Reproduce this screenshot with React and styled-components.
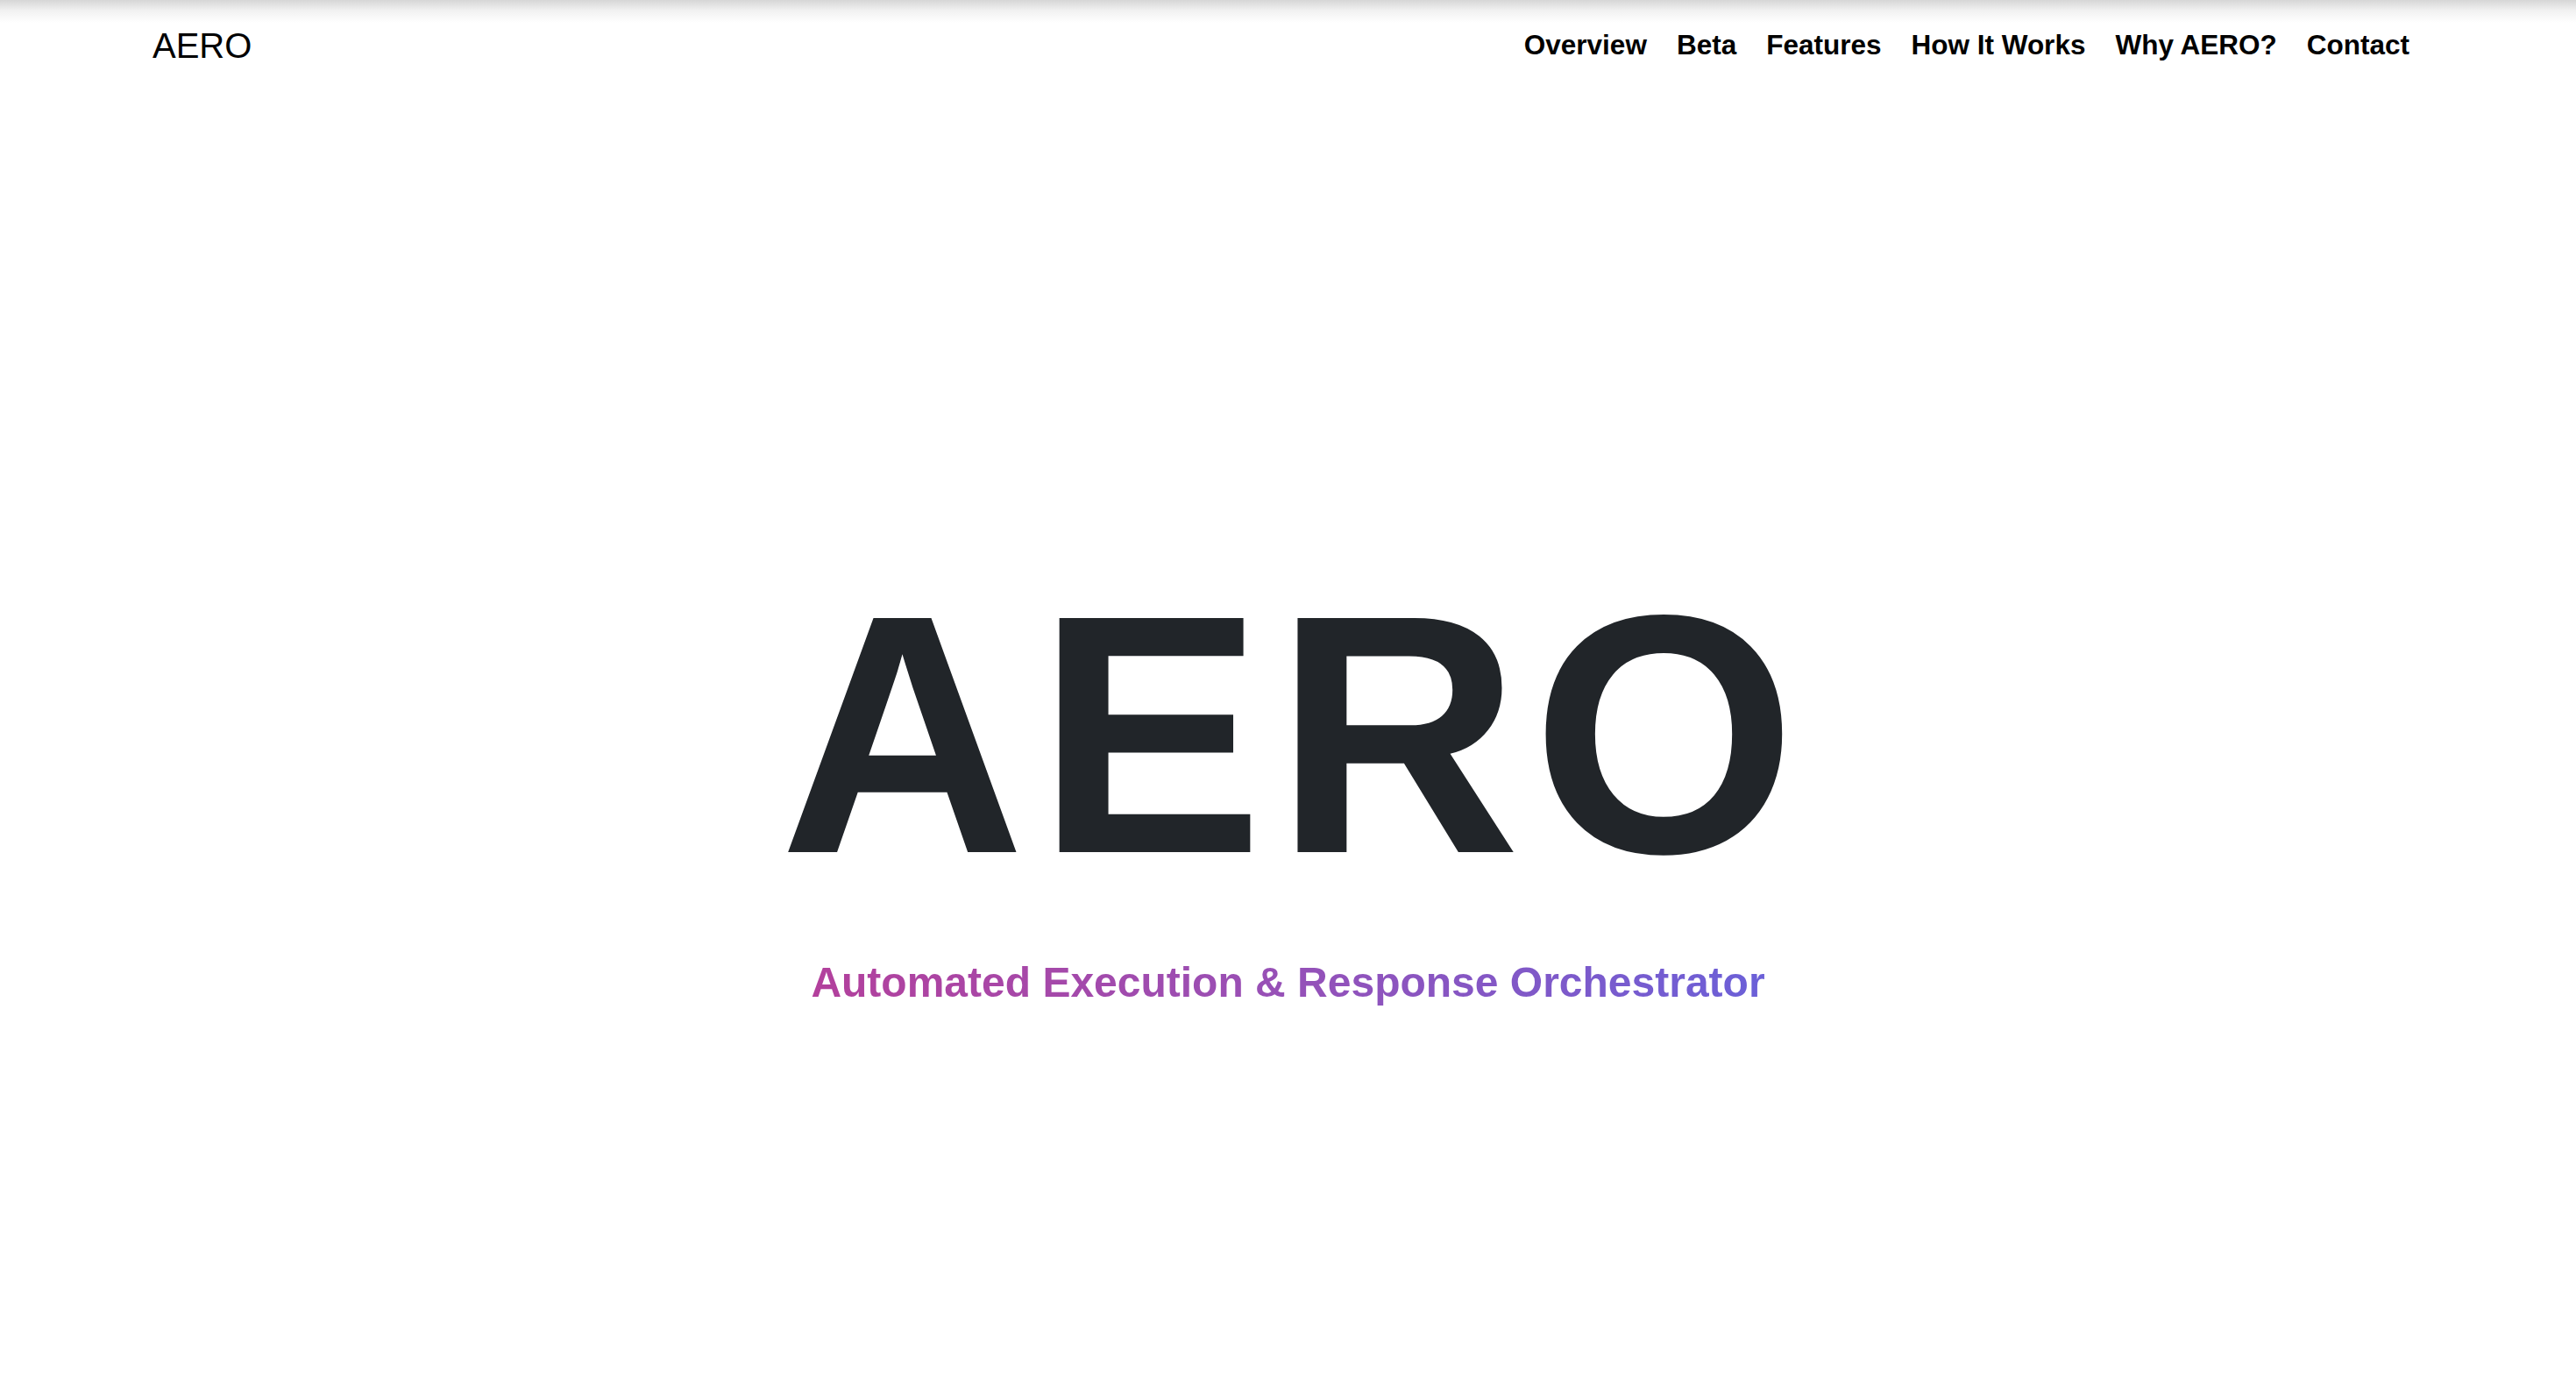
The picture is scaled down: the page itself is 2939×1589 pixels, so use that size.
import React from 'react'
import styled, { createGlobalStyle } from 'styled-components'

const GlobalStyle = createGlobalStyle`
  html, body {
    margin: 0;
    padding: 0;
    background: #fff;
  }
  body {
    font-family: "Liberation Sans", Arial, Helvetica, sans-serif;
    color: #000;
  }
  * {
    box-sizing: border-box;
  }
`

const Page = styled.div`
  min-height: 100vh;
  display: flex;
  flex-direction: column;
`

const Header = styled.header`
  height: 104px;
  display: flex;
  align-items: center;
  justify-content: space-between;
  padding: 0 190px 0 174px;
  background: linear-gradient(to bottom, #d6d6d6 0px, #f1f1f1 12px, #ffffff 26px);
`

const Logo = styled.a`
  font-size: 40px;
  font-weight: 400;
  color: #000;
  text-decoration: none;
  line-height: 1;
`

const Nav = styled.nav`
  display: flex;
  align-items: center;
  gap: 34px;
`

const NavLink = styled.a`
  font-size: 31.5px;
  font-weight: 700;
  color: #000;
  text-decoration: none;
  line-height: 1;
  white-space: nowrap;
`

const Hero = styled.section`
  flex: 1;
  display: flex;
  flex-direction: column;
  align-items: center;
  justify-content: center;
  padding-top: 100px;
`

const Title = styled.h1`
  margin: 0;
  font-size: 388px;
  font-weight: 700;
  line-height: 1;
  letter-spacing: 13px;
  margin-right: -13px;
  color: #212529;
`

const Tagline = styled.p`
  margin: 60px 0 0;
  font-size: 48px;
  font-weight: 700;
  line-height: 1.2;
  background: linear-gradient(90deg, #b3409c 0%, #9a4fb4 45%, #6b60d8 100%);
  -webkit-background-clip: text;
  background-clip: text;
  color: transparent;
`

const links = ['Overview', 'Beta', 'Features', 'How It Works', 'Why AERO?', 'Contact']

const App = () => {
  return (
    <Page>
      <GlobalStyle />
      <Header>
        <Logo href="#">AERO</Logo>
        <Nav>
          {links.map(link => (
            <NavLink key={link} href="#">{link}</NavLink>
          ))}
        </Nav>
      </Header>
      <Hero>
        <Title>AERO</Title>
        <Tagline>Automated Execution &amp; Response Orchestrator</Tagline>
      </Hero>
    </Page>
  )
}

export default App
